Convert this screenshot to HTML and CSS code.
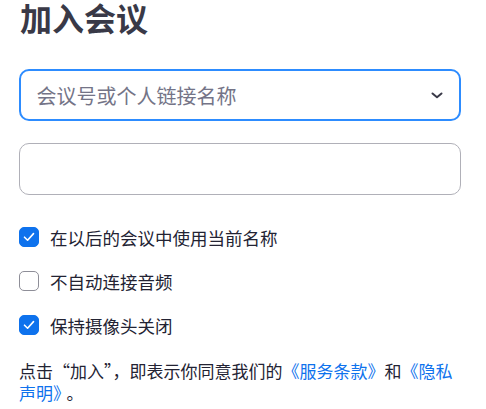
FILE: index.html
```html
<!DOCTYPE html>
<html lang="zh-CN">
<head>
<meta charset="utf-8">
<link rel="stylesheet" href="styles.css">
</head>
<body>
<div class="page">
  <h1 class="title">加入会议</h1>
  <div class="field field-active">
    <span class="placeholder">会议号或个人链接名称</span>
    <svg class="chevron" width="12" height="7" viewBox="0 0 12 7"><path d="M1.5 1.5 L6 5.2 L10.5 1.5" fill="none" stroke="#3a3a48" stroke-width="2" stroke-linecap="round" stroke-linejoin="round"/></svg>
  </div>
  <div class="field"></div>
  <ul class="options">
    <li class="option"><span class="box checked"><svg width="12" height="10" viewBox="0 0 12 10"><path d="M1.5 5.2 L4.6 8.2 L10.5 1.6" fill="none" stroke="#fff" stroke-width="1.6" stroke-linecap="round" stroke-linejoin="round"/></svg></span><span>在以后的会议中使用当前名称</span></li>
    <li class="option"><span class="box"></span><span>不自动连接音频</span></li>
    <li class="option"><span class="box checked"><svg width="12" height="10" viewBox="0 0 12 10"><path d="M1.5 5.2 L4.6 8.2 L10.5 1.6" fill="none" stroke="#fff" stroke-width="1.6" stroke-linecap="round" stroke-linejoin="round"/></svg></span><span>保持摄像头关闭</span></li>
  </ul>
  <p class="terms">点击“加入”，即表示你同意我们的<a class="link">《服务条款》</a>和<a class="link">《隐私声明》</a><span class="stop">。</span></p>
</div>
</body>
</html>
```
FILE: styles.css
```css
html, body {
  margin: 0;
  padding: 0;
  background: #ffffff;
}
body {
  font-family: "Noto Sans CJK SC", "Noto Sans", sans-serif;
  color: #232333;
}
.page {
  width: 442px;
  padding: 0 0 0 19px;
}
.title {
  margin: 0;
  font-size: 32px;
  line-height: 36px;
  font-weight: 700;
  color: #393947;
  padding-left: 1px;
  position: relative;
  top: -1px;
}
.field {
  box-sizing: border-box;
  height: 52px;
  border: 1.5px solid #b0b0b8;
  border-radius: 10px;
  display: flex;
  align-items: center;
  justify-content: space-between;
  padding: 0 17px 0 16px;
  margin-top: 22px;
}
.field-active {
  margin-top: 33px;
  border: 2px solid #2d8cff;
  padding: 0 16.5px 0 15.5px;
}
.placeholder {
  font-size: 20px;
  color: #747487;
}
.chevron {
  display: block;
}
.options {
  list-style: none;
  margin: 20px 0 0;
  padding: 0;
}
.option {
  display: flex;
  align-items: center;
  gap: 11px;
  height: 44px;
  font-size: 17.5px;
  color: #232333;
}
.box {
  box-sizing: border-box;
  width: 20px;
  height: 20px;
  border-radius: 5px;
  border: 1.5px solid #8e8e98;
  display: flex;
  align-items: center;
  justify-content: center;
  flex: none;
}
.box.checked {
  background: #0e72ed;
  border-color: #0e72ed;
}
.terms {
  margin: 13px 0 0;
  font-size: 17px;
  line-height: 22px;
  color: #232333;
}
.link {
  color: #0e72ed;
}
.stop {
  margin-left: 5px;
}
```
